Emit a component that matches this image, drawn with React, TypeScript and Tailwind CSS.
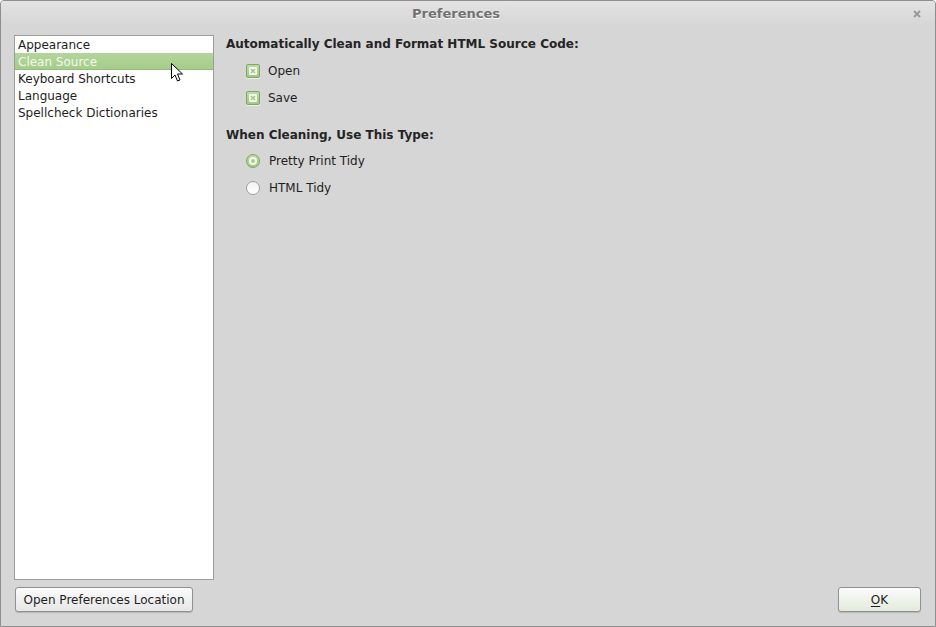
import React from "react";

function CheckBox() {
  return (
    <div className="w-[14px] h-[14px] rounded-[2px] border border-[#7fa765] bg-gradient-to-b from-[#b9dc9f] to-[#9fc985] flex items-center justify-center shadow-[0_1px_0_rgba(255,255,255,0.6)]">
      <div className="w-[8px] h-[8px] bg-[#f4f8f0] rounded-[1px] flex items-center justify-center">
        <svg width="8" height="8" viewBox="0 0 8 8">
          <path d="M2 2 L6 6 M6 2 L2 6" stroke="#9cc383" strokeWidth="1.4" />
        </svg>
      </div>
    </div>
  );
}

function Radio({ checked }: { checked: boolean }) {
  if (checked) {
    return (
      <div className="w-[14px] h-[14px] rounded-full border border-[#7fa765] bg-gradient-to-b from-[#b9dc9f] to-[#9fc985] flex items-center justify-center">
        <div className="w-[8px] h-[8px] rounded-full bg-[#f7faf4] flex items-center justify-center">
          <div className="w-[4px] h-[4px] rounded-full bg-[#a6cd8b]" />
        </div>
      </div>
    );
  }
  return (
    <div className="w-[14px] h-[14px] rounded-full border border-[#9e9e9e] bg-gradient-to-b from-[#f2f2f2] to-[#ffffff]" />
  );
}

export default function App() {
  const items = [
    "Appearance",
    "Clean Source",
    "Keyboard Shortcuts",
    "Language",
    "Spellcheck Dictionaries",
  ];
  return (
    <div className="w-[936px] h-[627px] relative font-['DejaVu_Sans',sans-serif] text-[12px] text-[#1e1e1e]">
      <div className="w-full h-full flex flex-col border border-[#8d8d8d] rounded-t-[4px] bg-[#d6d6d6] overflow-hidden">
        {/* title bar */}
        <div className="h-[25px] shrink-0 bg-gradient-to-b from-[#e3e3e3] to-[#d6d6d6] flex items-center relative">
          <div className="flex-1 flex justify-center pr-[24px]">
            <span className="font-bold text-[13px] text-[#717171] [text-shadow:0_1px_0_#ffffff] leading-none">
              Preferences
            </span>
          </div>
          <div className="absolute right-[14px] top-[9px]">
            <svg width="8" height="8" viewBox="0 0 8 8">
              <path d="M1 1 L7 7 M7 1 L1 7" stroke="#9b9b9b" strokeWidth="2" />
            </svg>
          </div>
        </div>

        {/* body */}
        <div className="flex-1 flex flex-col pl-[13px] pr-[14px] pt-[9px] pb-[14px]">
          <div className="flex-1 flex gap-[12px] min-h-0">
            {/* list */}
            <div className="w-[200px] bg-white border border-[#9c9c9c] flex flex-col">
              {items.map((it) =>
                it === "Clean Source" ? (
                  <div
                    key={it}
                    className="h-[17px] pl-[3px] flex items-center bg-gradient-to-b from-[#b2d699] to-[#a5cc8a] shadow-[inset_0_-1px_0_#94be78] text-[#f3f8ee] leading-none"
                  >
                    {it}
                  </div>
                ) : (
                  <div key={it} className="h-[17px] pl-[3px] flex items-center leading-none">
                    {it}
                  </div>
                )
              )}
            </div>

            {/* content */}
            <div className="flex-1 flex flex-col">
              <div className="h-[18px] flex items-center font-bold text-[#242424] leading-none">
                Automatically Clean and Format HTML Source Code:
              </div>
              <div className="mt-[4px] pl-[20px] flex flex-col">
                <div className="h-[27px] flex items-center gap-[8px]">
                  <CheckBox />
                  <span className="leading-none">Open</span>
                </div>
                <div className="h-[27px] flex items-center gap-[8px]">
                  <CheckBox />
                  <span className="leading-none">Save</span>
                </div>
              </div>
              <div className="mt-[15px] h-[18px] flex items-center font-bold text-[#242424] leading-none">
                When Cleaning, Use This Type:
              </div>
              <div className="mt-[3px] pl-[20px] flex flex-col">
                <div className="h-[27px] flex items-center gap-[9px]">
                  <Radio checked />
                  <span className="leading-none">Pretty Print Tidy</span>
                </div>
                <div className="h-[27px] flex items-center gap-[9px]">
                  <Radio checked={false} />
                  <span className="leading-none">HTML Tidy</span>
                </div>
              </div>
            </div>
          </div>

          {/* bottom buttons */}
          <div className="mt-[7px] flex justify-between items-center">
            <button className="ml-px h-[25px] w-[178px] rounded-[3px] border border-[#919191] bg-gradient-to-b from-[#fbfbfb] to-[#e7e7e7] shadow-[0_1px_1px_rgba(0,0,0,0.15)] text-[12px] text-[#1e1e1e] leading-none">
              Open Preferences Location
            </button>
            <button className="h-[25px] w-[83px] rounded-[3px] border border-[#919191] bg-gradient-to-b from-[#fbfbfb] to-[#e3ebdc] shadow-[0_1px_1px_rgba(0,0,0,0.15)] text-[12px] text-[#1e1e1e] leading-none">
              <span className="underline underline-offset-2">O</span>K
            </button>
          </div>
        </div>
      </div>

      {/* mouse cursor */}
      <div className="absolute left-[171px] top-[63px]">
        <svg width="13" height="20" viewBox="0 0 13 20">
          <path
            d="M0.5 0.5 L0.5 15.5 L4 12 L6.5 18 L9 17 L6.5 11 L11.5 11 Z"
            fill="#ffffff"
            stroke="#000000"
            strokeWidth="1"
            strokeLinejoin="miter"
          />
        </svg>
      </div>
    </div>
  );
}
